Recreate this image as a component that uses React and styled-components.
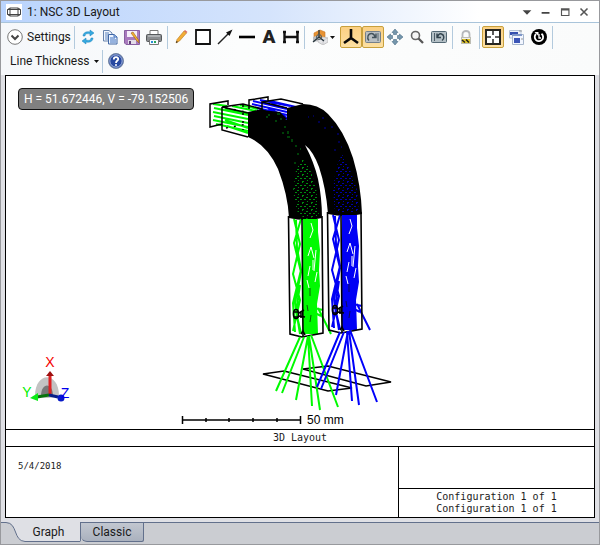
import styled, { createGlobalStyle } from "styled-components";

const GlobalStyle = createGlobalStyle`
    * {
        box-sizing: border-box;
    }
    body {
        margin: 0;
        font-family: Roboto, "Noto Sans", sans-serif;
        font-size: 12px;
        color: #1a1a1a;
    }
    button {
        font: inherit;
        color: inherit;
        padding: 0;
        margin: 0;
        border: 0;
        background: none;
    }
    svg {
        display: block;
        flex: none;
    }
`;

const Window = styled.main`
    display: flex;
    flex-direction: column;
    min-height: 100vh;
    border: 1px solid #98999d;
    background: #dfe0e5;
`;
const TitleBar = styled.header`
    display: flex;
    align-items: center;
    height: 22px;
    padding: 0 6px 0 5px;
    gap: 5px;
    border-bottom: 1px solid #a9c4da;
    background: linear-gradient(90deg, #bad4fd 0, #d5e4fc 45%, #fff 80%);
`;
const Title = styled.h1`
    flex: 1;
    margin: 0;
    font-size: 12px;
    line-height: 20px;
    font-weight: 400;
    white-space: nowrap;
`;
const WindowButtons = styled.div`
    display: flex;
`;
const WindowButton = styled.button`
    display: flex;
    justify-content: center;
    width: 19px;
`;
const Toolbars = styled.nav`
    display: flex;
    flex-direction: column;
    padding: 2px 0 2px 5px;
    background: linear-gradient(90deg, #f5f7fa 0, #fcfdfd 40%, #fafbfb 100%);
`;
const ToolRow = styled.div`
    display: flex;
    align-items: center;
    height: 24px;
`;
const ToolGroup = styled.div`
    display: flex;
    gap: ${props => props.$loose ? 1 : 0}px;
`;
const ToolButton = styled.button`
    display: flex;
    align-items: center;
    justify-content: center;
    width: 22px;
    height: 22px;
    border: 1px solid ${props => props.$active ? '#c8a03c' : 'transparent'};
    border-radius: 2px;
    background: ${props => props.$active ? 'linear-gradient(#fbd083, #fde0a2)' : 'none'};
`;
const WideButton = styled.button`
    display: flex;
    align-items: center;
    gap: 4px;
    width: ${props => props.$width}px;
    height: 22px;
    padding-left: ${props => props.$start}px;
    white-space: nowrap;
`;
const DropButton = styled(ToolButton)`
    width: 33px;
    gap: 2px;
`;
const LetterIcon = styled.span`
    font: 900 19px/20px Roboto, "Liberation Sans", sans-serif;
    color: #222;
`;
const Separator = styled.div`
    width: 1px;
    height: 23px;
    margin: 0 2px;
    background: #b3cadd;
`;
const Sheet = styled.section`
    display: flex;
    flex-direction: column;
    flex: 1;
    margin: 0 4px 4px;
    border: 1px solid #000;
    background: #fff;
`;
const Plot = styled.div`
    display: grid;
    flex: 1;
    & > * {
        grid-area: 1 / 1;
    }
`;
const Drawing = styled.svg`
    width: 100%;
    height: 100%;
`;
const Readout = styled.output`
    align-self: start;
    justify-self: start;
    z-index: 1;
    margin: 12px;
    padding: 0 5px;
    border: 1px solid #111;
    border-radius: 4px;
    background: #808080;
    color: #fff;
    line-height: 20px;
    white-space: nowrap;
`;
const SheetTitle = styled.h2`
    margin: 0;
    border-top: 1px solid #000;
    border-bottom: 1px solid #000;
    font: 400 10px/16px "DejaVu Sans Mono", monospace;
    text-align: center;
`;
const TitleBlock = styled.div`
    display: grid;
    grid-template-columns: 2fr 1fr;
    height: 70px;
`;
const Notes = styled.p`
    margin: 0;
    padding: 12px;
    font: 9px/14px "DejaVu Sans Mono", monospace;
`;
const ConfigCell = styled.div`
    display: flex;
    flex-direction: column;
    justify-content: end;
    border-left: 1px solid #000;
    & > p {
        margin: 0;
        padding: 2px;
        border-top: 1px solid #000;
        font: 10px/12px "DejaVu Sans Mono", monospace;
        text-align: center;
    }
`;
const TabStrip = styled.div`
    display: flex;
    height: 22px;
    padding-bottom: 2px;
    background: #cbcdd2;
`;
const Tab = styled.button`
    display: flex;
    justify-content: center;
    width: ${props => props.$selected ? 80 : 63}px;
    border: solid #62708c;
    border-width: ${props => props.$selected ? '0' : '1px'} 1px ${props => props.$selected ? '0' : '1px'} 0;
    border-radius: 0 0 2px 6px;
    background: ${props => props.$selected ? 'none' : 'linear-gradient(#c2c7d0, #aab1be)'};
    line-height: 18px;
`;
const TabLabel = styled.span`
    flex: 1;
    line-height: 20px;
    padding-right: 8px;
    background: #dfe0e5;
    border-bottom: 1px solid #62708c;
`;
const TabFill = styled.div`
    flex: 1;
    border-top: 1px solid #62708c;
`;

const Icon = ({ children, size = 16 }) => (
    <svg width={size} height={size} viewBox="0 0 16 16" fill="none" aria-hidden="true">{children}</svg>
);

const Caret = () => (
    <svg width="5" height="3" viewBox="0 0 5 3" aria-hidden="true"><path d="M0 0H5L2.5 3Z" fill="#111" /></svg>
);

const icons = {
    refresh: <>
        <path d="M3 7C3 4 6 2 10 3V1L14 4L10 7V5C7 4 5 5 5 7Z" fill="#35a9df" stroke="#1c83bd" strokeWidth=".5" />
        <path d="M13 9C13 12 10 14 6 13V15L2 12L6 9V11C9 12 11 11 11 9Z" fill="#35a9df" stroke="#1c83bd" strokeWidth=".5" />
    </>,
    copy: <>
        <path d="M1.5 1.5H7L10 4V12H1.5Z" fill="#f1f6fd" stroke="#6682ac" />
        <path d="M3 4H7M3 6H7M3 8H7M3 10H7" stroke="#5d83bd" />
        <path d="M6.500 5.500H12L15 8V15H6.500Z" fill="#edf4ff" stroke="#3f66a4" />
        <path d="M12 5.500V8H15M8 9H13M8 11H14M8 13H14" stroke="#3f70be" />
    </>,
    save: <>
        <path d="M.5 1.500H15.500V15.500H2L.5 14Z" fill="#a97abd" stroke="#8860a0" />
        <path d="M3 2H13V8H3Z" fill="#f6eef9" /><path d="M4 11H12V15H4Z" fill="#e3dce8" /><path d="M5 12H7V15H5Z" fill="#604078" />
        <path d="M7 4L13 12L15 14L14.500 11L9 3Z" fill="#f6b02d" stroke="#96601f" strokeWidth=".6" />
    </>,
    print: <>
        <path d="M4 6V1.500H12V6" fill="#fff" stroke="#777" />
        <rect x=".5" y="5.500" width="15" height="7" rx="1" fill="#8a8d90" stroke="#55585b" />
        <path d="M2 7H14" stroke="#d1d4d6" /><path d="M3.500 10.500H12.500V15.500H3.500Z" fill="#f6faff" stroke="#777" />
        <path d="M5 13H7" stroke="#2a8ed6" strokeWidth="2" /><path d="M8 13H10" stroke="#27a75b" strokeWidth="2" />
    </>,
    pencil: <>
        <path d="M3 14L4 10.500L11 2L13.500 4L6.500 12Z" fill="#f3ad35" stroke="#b77a20" strokeWidth=".6" />
        <path d="M11 2L12 1L14.500 3L13.500 4Z" fill="#dd6a5b" /><path d="M3 14L3.500 12L5 13Z" fill="#222" />
    </>,
    rect: <path d="M1 1H15V15H1Z" fill="#fff" stroke="#111" strokeWidth="1.800" />,
    arrow: <><path d="M1 15L12 4" stroke="#222" strokeWidth="1.500" /><path d="M15.500 .5L9 3.500L12.500 7Z" fill="#111" /></>,
    line: <path d="M0 8H16" stroke="#000" strokeWidth="2.600" />,
    dimension: <path d="M1.500 2V14M14.500 2V14M2 8H14M0 3H3M0 13H3M13 3H16M13 13H16" stroke="#111" strokeWidth="2.400" />,
    cube: <>
        <path d="M2 4L8 1L13 3V8L7 9L2 8Z" fill="#e79232" stroke="#c77621" strokeWidth=".6" />
        <path d="M1 8L7 6V12L1 13Z" fill="#b9bcc0" />
        <path d="M6 10L11 8L16 9V13L11 16L6 13Z" fill="#e4e5e8" stroke="#bbb" strokeWidth=".8" />
        <path d="M6 10L11 11L16 9M11 11V16" stroke="#c4c4c8" strokeWidth=".8" />
        <path d="M7 1V8L1 13M7 8L12 12" stroke="#26343b" strokeWidth="1.300" />
        <circle cx="7" cy="8" r="2.500" stroke="#4d5a60" />
    </>,
    axes: <path d="M8 0V9L1 14M8 9L15 14" stroke="#080808" strokeWidth="2.600" />,
    rotate: <>
        <rect x=".5" y="2.500" width="15" height="11" rx="1" fill="#b9bfc3" stroke="#75808a" />
        <path d="M4 11.500C1.500 9 3 4.500 6.500 4.500C8.500 4.500 9.500 6 10 8M11 4.500V8.500H7" stroke="#44535c" strokeWidth="1.400" />
        <path d="M13 4V12" stroke="#596870" />
    </>,
    pan: <>
        <path d="M8 0L11 3.500H9.500V5.500H6.500V3.500H5ZM8 16L5 12.500H6.500V10.500H9.500V12.500H11ZM0 8L3.500 5V6.500H5.500V9.500H3.500V11ZM16 8L12.500 11V9.500H10.500V6.500H12.500V5Z" fill="#7596ac" stroke="#4d7088" strokeWidth=".6" />
    </>,
    zoom: <><circle cx="6.500" cy="6.500" r="4" fill="#f5f5f5" stroke="#666" strokeWidth="1.600" /><path d="M9.500 9.500L14 14" stroke="#555" strokeWidth="2.300" /></>,
    reset: <>
        <rect x=".5" y="2.500" width="15" height="11" rx="1" fill="#b3bfc5" stroke="#536874" />
        <path d="M3.500 4V12" stroke="#4c5c66" />
        <path d="M6 4.500V8.500H10M6.500 8C7.500 5 9 4.500 10.500 5C13.500 6 13.500 10 11 11.500" stroke="#33444e" strokeWidth="1.400" />
    </>,
    lock: <>
        <path d="M4.500 9V5C4.500 1 11.500 1 11.500 5V9" stroke="#b6b8bb" strokeWidth="1.800" />
        <rect x="3.500" y="8.500" width="9" height="6" fill="#efefef" stroke="#bdbdb4" />
        <path d="M4 10H12V14H4Z" fill="#e0c52a" />
        <path d="M4 11L7 13.500M8 10.500L11 13.500" stroke="#27261b" strokeWidth="1.600" />
    </>,
    fit: <>
        <path d="M1 1H15V15H1Z" fill="#fff" stroke="#27251f" strokeWidth="2" />
        <path d="M8 2V6M8 10V14M2 8H6M10 8H14" stroke="#333" strokeWidth="1.600" />
    </>,
    windows: <>
        <path d="M1.500 1.500H13V9H1.500Z" fill="#eef3fb" stroke="#b6c5d9" /><path d="M2 3H10V6H2Z" fill="#3651b0" />
        <path d="M4.500 5.500H15.500V15.500H4.500Z" fill="#f2f6ff" stroke="#a6b6cc" /><path d="M4 5H14V7H4Z" fill="#7f97c8" />
        <path d="M6 9H12V14H6Z" fill="#3b55b7" /><path d="M11 2H14M13 10H15" stroke="#999" />
    </>,
    timer: <>
        <circle cx="8" cy="8" r="8" fill="#000" />
        <path d="M5 5A4.200 4.200 0 1 0 10.500 4.700" stroke="#fff" strokeWidth="1.800" /><path d="M3.500 3H7.500V7Z" fill="#fff" /><path d="M8 5V9H10" stroke="#fff" strokeWidth="1.300" />
    </>,
    help: <>
        <circle cx="8" cy="8" r="7.500" fill="#2748a0" stroke="#7486a2" />
        <circle cx="8" cy="8" r="6.200" stroke="#cbd7ef" strokeWidth=".8" />
        <path d="M5.800 6.500C5.800 3.300 10.500 3.600 10.200 6.200C10 8 8 7.700 8 10" stroke="#fff" strokeWidth="1.800" /><circle cx="8" cy="12" r="1" fill="#fff" />
    </>,
    settings: <><circle cx="8" cy="8" r="7.300" fill="#fff" stroke="#777" /><path d="M4.500 6.500L8 10L11.500 6.500" stroke="#444" strokeWidth="2" /></>,
};

const groups = [
    [['refresh', 'Update'], ['copy', 'Copy'], ['save', 'Save'], ['print', 'Print']],
    [['pencil', 'Annotate'], ['rect', 'Rectangle'], ['arrow', 'Arrow'], ['line', 'Line'], ['letter', 'Text'], ['dimension', 'Dimension']],
    [['cube', 'View planes', 'drop'], ['axes', 'Axes', 'on'], ['rotate', 'Rotate', 'on'], ['pan', 'Pan'], ['zoom', 'Zoom'], ['reset', 'Reset view']],
    [['lock', 'Lock']],
    [['fit', 'Fit window', 'on'], ['windows', 'Clone window'], ['timer', 'Auto refresh']],
];

const Tool = ({ name, label, mode }) => {
    if (mode === 'drop') {
        return <DropButton aria-label={label}><Icon>{icons[name]}</Icon><Caret /></DropButton>;
    }
    return (
        <ToolButton aria-label={label} $active={mode === 'on'}>
            {name === 'letter' ? <LetterIcon>A</LetterIcon> : <Icon>{icons[name]}</Icon>}
        </ToolButton>
    );
};

// rays bouncing inside a straight light pipe, drawn once for each pipe
const PipeRays = ({ color }) => (
    <g stroke={color} fill="none">
        <path d="M303 219H318L318 232L320 250L319 270L320 286L317 304L318 334H303Z" fill={color} stroke="none" />
        <path d="M294 219L300 244L293 274L300 300L293 331M301 219L294 243L301 272L295 303L300 334M296 220L297 248L301 270L293 303L295 332M300 285L296 312L301 333" strokeWidth="2" />
        <path d="M311 223L313 230L310 238M308 256L311 247L314 258M316 250L314 271M310 266L308 276M313 260V270M317 272L315 282M307 280L309 288" stroke="#fff" />
        <path d="M310 288V296M307 305L308 311M311 315L310 322" stroke="#111" strokeWidth=".7" />
        <path d="M314 308L323 310M315 313L321 316M318 308L331 334" strokeWidth="2" />
    </g>
);

const PipeFrame = () => (
    <g stroke="#000" strokeWidth="1.600" fill="none">
        <path d="M288.500 216L290 334L302 337L323 333L322 216M302 219L303 337" />
        <ellipse cx="296" cy="314" rx="2.500" ry="4.500" />
        <path d="M293 312H298M294 317H299M299 313L304 310M299 316L305 317M301 311V318M301 334L303 331L305 335" />
    </g>
);

const LayoutDrawing = () => (
    <Drawing viewBox="6 76 588 353" role="img" aria-label="3D layout of two curved light pipes">
        <defs>
            <pattern id="greenMesh" width="9" height="7" patternUnits="userSpaceOnUse">
                <path d="M0 1.500H2M5 .5H6M7 3.500H9M3 3.500H5M1 5.500H2M5 6.500H7" stroke="#008c10" />
            </pattern>
            <pattern id="blueMesh" width="9" height="7" patternUnits="userSpaceOnUse">
                <path d="M0 1.500H2M5 .5H6M7 3.500H9M3 3.500H5M1 5.500H2M5 6.500H7" stroke="#0000a8" />
            </pattern>
        </defs>

        <g stroke="#00f700" strokeWidth="2">
            <path d="M213 104L227 106M214 108L248 115M213 112L248 119M214 116L248 123M213 120L248 127M216 124L248 131M225 109L248 113M225 120L248 128M232 106L256 111M227 126L248 133M240 105L258 109" />
        </g>
        <g stroke="#0000f5" strokeWidth="2">
            <path d="M253 101L287 109M252 104L287 112M257 108L287 115M268 108L287 118M270 101L296 107M260 100L290 106M266 114L287 119M271 104L287 109" />
        </g>
        <g stroke="#000" strokeWidth="1.500" fill="none">
            <path d="M228 105V101L210 104V127L222 124M222 107V130L248 137M222 107L248 113M222 107L243 104L262 109" />
            <path d="M268 101V97L249 100V109M262 112V102L287 108M262 102L281 99L303 104" />
            <path d="M226 108L246 112M226 128L247 124M243 105V130" strokeDasharray="2 6" />
        </g>

        <path d="M248 112L262 109L287 120V108L303 104Q318 104 328 114Q344 130 353 158Q361 185 362 214Q345 218 328 214Q326 188 319 167Q313 151 305 145Q314 162 318 179Q322 198 322 218Q305 222 289 218Q288 195 278 169Q267 145 248 137Z" fill="#000" />
        <path d="M262 110L280 112L287 119L276 122L260 116Z" fill="#000" />
        <path d="M296 170L301 158L309 166L316 187L319 216L305 219L297 211L293 191Z" fill="url(#greenMesh)" />
        <path d="M336 168L342 154L350 170L357 190L359 212L335 213L333 190Z" fill="url(#blueMesh)" />
        <path d="M266 117H268M269 114V116M277 114H280M275 121H277M281 118V120M284 127H286M283 132V134M288 131V134M287 137H290M292 139V142M295 146H297M300 149H301M297 154H299M294 163H296" stroke="#008010" />
        <path d="M308 117H309M313 116H314M318 122H320M323 117V119M325 127V129M331 127H333M337 134H339M338 142H340M334 150H336M341 147H342" stroke="#0000a0" />

        <PipeRays color="#00fa00" />
        <PipeFrame />
        <g transform="translate(39 -4)">
            <PipeRays color="#0000f5" />
            <PipeFrame />
        </g>

        <g stroke="#000" strokeWidth="1.700" fill="none">
            <path d="M263 374L284 371L352 388L328 391Z" />
            <path d="M303 369L328 366L391 382L366 386Z" />
        </g>
        <path d="M300 337L276 391M304 337L282 393M308 336L296 400M308 336L312 406M309 336L320 410M311 335L338 407" stroke="#00fa00" strokeWidth="2" />
        <path d="M340 332L317 387M344 332L321 389M348 331L336 395M347 332L352 401M349 331L359 405M350 330L377 402" stroke="#0000fa" strokeWidth="2" />

        <path d="M182 420H301M182.500 416V424M300.500 416V424M206 418V422M229 418V422M253 418V422M277 418V422" stroke="#000" strokeWidth="1.500" />
        <text x="307" y="424" fontFamily="Liberation Sans, sans-serif" fontSize="12">50 mm</text>

        <path d="M35 396C35 371 59 371 59 396Q47 400 35 396Z" fill="#c3c3c3" />
        <path d="M41 396C41 382 53 382 53 396Z" fill="#777" />
        <path d="M50 395V376" stroke="#df2022" strokeWidth="3" /><path d="M46 376L50 371L54 376Z" fill="#9e1010" />
        <path d="M49 395L37 397" stroke="#08730d" strokeWidth="3" /><path d="M38 393V401L30 398Z" fill="#0bea15" />
        <path d="M49 395L58 397" stroke="#071e88" strokeWidth="3" /><circle cx="61" cy="398" r="3.500" fill="#0719c7" />
        <g fontFamily="Liberation Sans Narrow, Liberation Sans, sans-serif" fontSize="14" textAnchor="middle">
            <text x="50" y="367" fill="#f40000">X</text>
            <text x="27" y="397" fill="#00ee00">Y</text>
            <text x="65" y="398" fill="#0000ed">Z</text>
        </g>
    </Drawing>
);

function App() {
    return (
        <>
        <GlobalStyle />
        <Window>
            <TitleBar>
                <svg width="16" height="16" viewBox="0 0 16 16" aria-hidden="true">
                    <path d="M0 0H16V16H0Z" fill="#fff" />
                    <path d="M4 4H12V12H4ZM4 4L1.500 5.500V10.500L4 12M12 4L14.500 5.500V10.500L12 12M1.500 5.500H14.500M1.500 10.500H14.500" fill="none" stroke="#444" />
                </svg>
                <Title>1: NSC 3D Layout</Title>
                <WindowButtons>
                    <WindowButton aria-label="Window menu"><Icon size={14}><path d="M3 6H13L8 11Z" fill="#444" /></Icon></WindowButton>
                    <WindowButton aria-label="Minimize"><Icon size={14}><path d="M3 9H12" stroke="#444" strokeWidth="2" /></Icon></WindowButton>
                    <WindowButton aria-label="Maximize"><Icon size={14}><path d="M4 4.500H12.500V12H4ZM4 5.500H12" stroke="#555" strokeWidth="1.300" /></Icon></WindowButton>
                    <WindowButton aria-label="Close"><Icon size={14}><path d="M4 4L12 12M12 4L4 12" stroke="#555" strokeWidth="1.800" /></Icon></WindowButton>
                </WindowButtons>
            </TitleBar>
            <Toolbars>
                <ToolRow>
                    <WideButton $start={1} $width={66}><Icon>{icons.settings}</Icon>Settings</WideButton>
                    {groups.map((group, i) => [
                        <Separator key={'sep' + i} />,
                        <ToolGroup key={'group' + i} $loose={i === groups.length - 1}>
                            {group.map(([name, label, mode]) => <Tool key={name} name={name} label={label} mode={mode} />)}
                        </ToolGroup>
                    ])}
                    <Separator />
                </ToolRow>
                <ToolRow>
                    <WideButton $start={4} $width={94}>Line Thickness<Caret /></WideButton>
                    <Separator />
                    <ToolButton aria-label="Help"><Icon>{icons.help}</Icon></ToolButton>
                </ToolRow>
            </Toolbars>
            <Sheet>
                <Plot>
                    <LayoutDrawing />
                    <Readout>H = 51.672446, V = -79.152506</Readout>
                </Plot>
                <SheetTitle>3D Layout</SheetTitle>
                <TitleBlock>
                    <Notes>5/4/2018</Notes>
                    <ConfigCell>
                        <p>Configuration 1 of 1<br />Configuration 1 of 1</p>
                    </ConfigCell>
                </TitleBlock>
            </Sheet>
            <TabStrip>
                <Tab $selected>
                    <svg width="24" height="20" viewBox="0 0 24 20" aria-hidden="true">
                        <path d="M0 0H6C17 1 12 19 24 19.500V0Z" fill="#dfe0e5" />
                        <path d="M0 .5H5C17 1 12 19 24 19.500" fill="none" stroke="#62708c" />
                    </svg>
                    <TabLabel>Graph</TabLabel>
                </Tab>
                <Tab>Classic</Tab>
                <TabFill />
            </TabStrip>
        </Window>
        </>
    );
}

export default App
